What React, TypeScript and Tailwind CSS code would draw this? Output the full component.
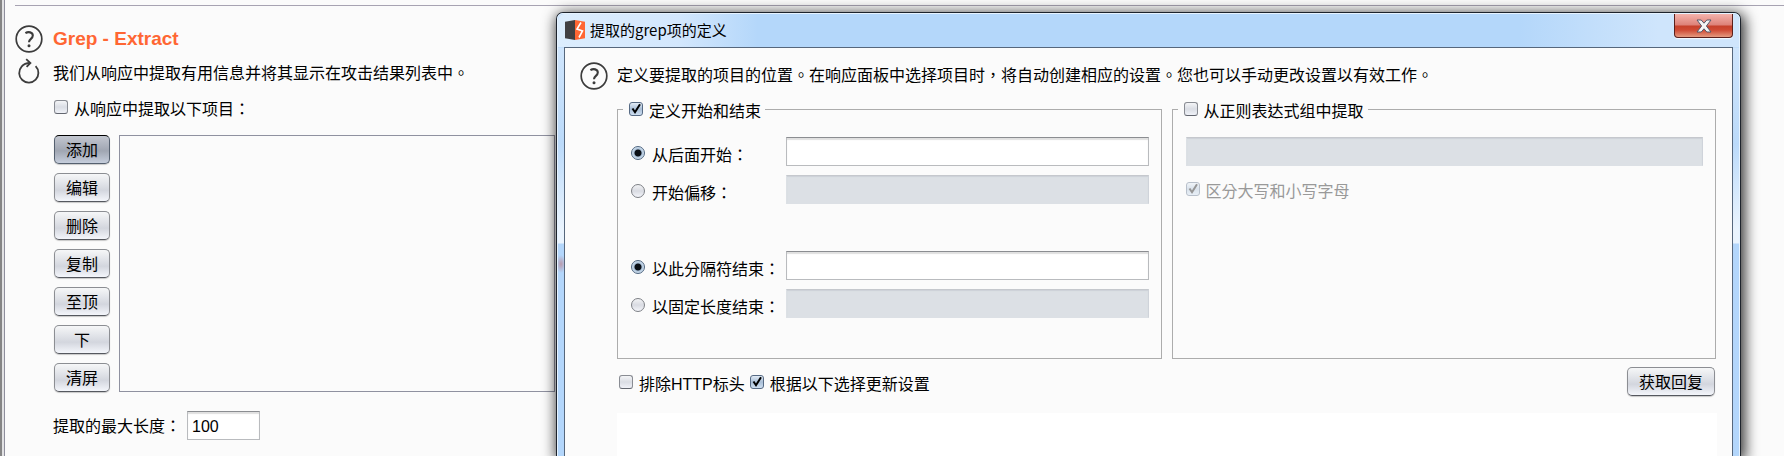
import React, { useState } from 'react';

const actions = ['添加', '编辑', '删除', '复制', '至顶', '下', '清屏'];

const buttonBase =
  'h-[29px] rounded-[5px] border pt-[3px] text-base leading-none text-black shadow-[0_1px_1px_rgba(0,0,0,0.2)]';
const buttonNormal =
  'border-[#8c8e93] border-b-[#55585f] bg-linear-to-b from-[#f6f7f8] via-[#d3d6de] via-60% to-[#f4f6fb]';
const buttonActive =
  'border-[#55606f] border-t-black bg-linear-to-b from-[#c3c7d0] via-[#a0a6b2] via-55% to-[#c6cedc]';

const fieldBase =
  'block h-[29px] min-w-0 border px-1 pt-[2px] font-[Liberation_Sans,sans-serif] text-base text-black outline-none';
const fieldEnabled =
  'border-[#b9bbbe] border-t-[#8b8d91] bg-white shadow-[inset_0_2px_1px_#e0e0e0]';
const fieldDisabled =
  'border-[#dce0e5] border-t-[#c5c8cd] border-r-[#cfd3da] bg-[#dce0e5] shadow-[inset_0_1px_1px_#cdd1d7]';

function HelpIcon() {
  return (
    <svg viewBox="0 0 28 28" className="size-7 shrink-0" fill="none" stroke="#3c3c3c" aria-hidden="true">
      <circle cx="14" cy="14" r="12.8" strokeWidth="1.7" />
      <path d="M10.4 8.2c3-2 7.4-1 7.4 2.4 0 3.2-3.8 3.4-3.8 6.6" strokeWidth="2.1" />
      <circle cx="14" cy="20.8" r="1.5" fill="#3c3c3c" stroke="none" />
    </svg>
  );
}

function ResetIcon() {
  return (
    <svg viewBox="0 0 28 28" className="size-7 shrink-0" fill="none" stroke="#3c3c3c" strokeWidth="1.8" aria-hidden="true">
      <path d="M20.6 8.2a9.6 9.6 0 1 1-14 .4C8.4 6.4 11 5 15 5" />
      <path d="M11.2 1.2 15.4 5l-3.8 3.8" />
    </svg>
  );
}

function Logo() {
  return (
    <svg viewBox="0 0 20 20" className="h-5 w-5 shrink-0" aria-hidden="true">
      <path d="M0 1.8 10 0v20L0 18.2z" fill="#414042" />
      <path d="M10 0 20 1.8v16.4L10 20z" fill="#ff6633" />
      <path d="M16 2.5 12 9l5.500 2L14 17.5" fill="none" stroke="#fff" strokeWidth="1.6" />
    </svg>
  );
}

interface TickProps {
  id: string;
  label: string;
  defaultChecked?: boolean;
  disabled?: boolean;
}

function Tick({ id, label, defaultChecked, disabled }: TickProps) {
  return (
    <label htmlFor={id} className={`flex h-[14px] items-start gap-[6px] ${disabled ? 'text-[#999]' : 'text-black'}`}>
      <span className={`grid size-[14px] shrink-0 ${disabled ? 'opacity-40' : ''}`}>
        <input
          id={id}
          type="checkbox"
          defaultChecked={defaultChecked}
          disabled={disabled}
          className="peer col-start-1 row-start-1 size-[14px] appearance-none rounded-[3px] border border-[#898c93] border-b-[#62666f] bg-linear-to-b from-[#f4f5f7] via-[#dadde4] to-[#f0f2f8] checked:border-[#566a84] checked:from-[#e3ecf6] checked:via-[#a9bed6] checked:to-[#cfe0f2]"
        />
        <svg viewBox="0 0 14 14" className="pointer-events-none invisible col-start-1 row-start-1 size-[14px] peer-checked:visible" fill="none" stroke="#000" strokeWidth="2" aria-hidden="true">
          <path d="M3.5 6.5 6 10.2 11 2.2" />
        </svg>
      </span>
      <span className="mt-[2px] leading-4">{label}</span>
    </label>
  );
}

interface RuleRowProps {
  id: string;
  group: string;
  label: string;
  active?: boolean;
}

function RuleRow({ id, group, label, active }: RuleRowProps) {
  return (
    <div className="flex items-center">
      <label htmlFor={id} className="mt-[3px] flex h-[14px] w-[155px] shrink-0 items-start gap-[7px] text-black">
        <input
          id={id}
          type="radio"
          name={group}
          defaultChecked={active}
          className="size-[14px] shrink-0 appearance-none rounded-full border border-[#7d8086] bg-linear-to-b from-[#f2f3f5] via-[#d9dbe2] to-[#f4f5fa] checked:border-[#4e6580] checked:bg-[radial-gradient(circle,#0a0f16_3px,#a9c0d8_4px,#d3e2f0_6px)]"
        />
        <span className="mt-[2px] leading-4">{label}</span>
      </label>
      <input
        type="text"
        aria-label={label}
        disabled={!active}
        className={`${fieldBase} flex-1 ${active ? fieldEnabled : fieldDisabled}`}
      />
    </div>
  );
}

function ExtractPanel() {
  const [length, setLength] = useState('100');
  return (
    <section className="w-[550px] pl-[10px]">
      <div className="flex items-center gap-[10px] pt-[19px]">
        <HelpIcon />
        <h2 className="font-[Liberation_Sans,sans-serif] text-[19px] leading-7 font-bold text-[#ff6633]">
          Grep - Extract
        </h2>
      </div>
      <div className="mt-[5px] flex items-start gap-[10px]">
        <ResetIcon />
        <p className="pt-1 leading-6">我们从响应中提取有用信息并将其显示在攻击结果列表中。</p>
      </div>
      <div className="mt-[14px] pl-[38px]">
        <div className="pl-px">
          <Tick id="extract-items" label="从响应中提取以下项目：" />
        </div>
        <div className="mt-[21px] flex gap-[9px] pl-px">
          <div className="flex flex-col gap-[9px]">
            {actions.map((name, i) => (
              <button
                key={name}
                type="button"
                className={`${buttonBase} w-14 ${i === 0 ? buttonActive : buttonNormal}`}
              >
                {name}
              </button>
            ))}
          </div>
          <div className="flex-1 border border-[#8f91a0]" />
        </div>
        <div className="mt-[19px] flex items-center gap-[6px]">
          <label htmlFor="max-length" className="pt-[3px] leading-4">提取的最大长度：</label>
          <input
            id="max-length"
            type="text"
            value={length}
            onChange={(e) => setLength(e.target.value)}
            className={`${fieldBase} ${fieldEnabled} w-[73px]`}
          />
        </div>
      </div>
    </section>
  );
}

function GrepDialog() {
  return (
    <div
      role="dialog"
      aria-labelledby="dialog-title"
      className="absolute top-3 right-[43px] bottom-0 left-[556px] flex flex-col rounded-t-[7px] border border-b-0 border-[#1d232c] bg-[#b4d7fa] shadow-[2px_3px_14px_2px_rgba(0,0,0,0.8)]"
    >
      <div className="flex flex-1 flex-col rounded-t-[6px] border border-b-0 border-[#e6f3ff] bg-[radial-gradient(5px_9px_at_3px_250px,#b99aac,transparent),linear-gradient(to_bottom,#b4d7fa_0px,#b4d7fa_33px,#cfe5fc_34px,#bbdafa_130px,#eaf4fe_215px,#eaf4fe_229px,#b3d6fb_230px)] px-[6px]">
        <header className="-mx-[6px] flex h-[33px] items-start rounded-t-[6px] bg-[linear-gradient(to_right,#dcedfd_0px,#d3e7fd_120px,transparent_200px,transparent_calc(100%-220px),#cfe5fc_calc(100%-80px),#cfe5fc_100%)] px-[6px]">
          <div className="flex flex-1 items-center gap-[5px] pt-[6px] pl-px">
            <Logo />
            <h1
              id="dialog-title"
              className="font-[Noto_Sans_CJK_SC,sans-serif] text-[15px] leading-5 text-black"
            >
              提取的grep项的定义
            </h1>
          </div>
          <button
            type="button"
            aria-label="关闭"
            className="flex h-6 w-[59px] items-center justify-center rounded-b-[4px] border border-t-0 border-[#5b1f1b] bg-[linear-gradient(to_bottom,#f4b3ac,#dd8178_48%,#c6402b_52%,#cf4a34_70%,#e59a80)] shadow-[0_1px_1px_#f4faff]"
          >
            <svg viewBox="0 0 16 14" className="h-[14px] w-4" aria-hidden="true">
              <path d="M1 1h4.2L8 4.2 10.8 1H15l-4.6 6L15 13h-4.2L8 9.8 5.2 13H1l4.6-6z" fill="#f4f4f4" stroke="#55586b" />
            </svg>
          </button>
        </header>
        <div className="flex flex-1 flex-col border border-b-0 border-[#56677c] bg-[#fbfbfb] px-[15px]">
          <div className="flex items-center gap-[9px] pt-[14px]">
            <HelpIcon />
            <p className="leading-7">
              定义要提取的项目的位置。在响应面板中选择项目时，将自动创建相应的设置。您也可以手动更改设置以有效工作。
            </p>
          </div>
          <div className="flex flex-1 flex-col pl-[37px]">
            <div className="mt-3 flex gap-[10px] pr-px">
              <fieldset className="min-w-0 flex-1 border border-[#acacac] pr-3 pb-10 pl-[13px]">
                <legend className="-ml-2 pr-1 pl-[6px]">
                  <Tick id="define-range" label="定义开始和结束" defaultChecked />
                </legend>
                <div className="mt-[21px] flex flex-col gap-[9px]">
                  <RuleRow id="after" group="start" label="从后面开始：" active />
                  <RuleRow id="offset" group="start" label="开始偏移：" />
                </div>
                <div className="mt-[47px] flex flex-col gap-[9px]">
                  <RuleRow id="delimiter" group="end" label="以此分隔符结束：" active />
                  <RuleRow id="fixed" group="end" label="以固定长度结束：" />
                </div>
              </fieldset>
              <fieldset className="min-w-0 flex-1 border border-[#acacac] pr-3 pl-[13px]">
                <legend className="-ml-2 pr-1 pl-[6px]">
                  <Tick id="regex-group" label="从正则表达式组中提取" />
                </legend>
                <input
                  type="text"
                  aria-label="从正则表达式组中提取"
                  disabled
                  className={`${fieldBase} ${fieldDisabled} mt-[21px] mb-4 w-full`}
                />
                <Tick id="case" label="区分大写和小写字母" defaultChecked disabled />
              </fieldset>
            </div>
            <div className="mt-2 flex items-center justify-between pr-[2px] pl-[2px]">
              <div className="flex gap-[5px]">
                <Tick id="exclude-headers" label="排除HTTP标头" />
                <Tick id="update-config" label="根据以下选择更新设置" defaultChecked />
              </div>
              <button type="button" className={`${buttonBase} ${buttonNormal} w-[88px]`}>
                获取回复
              </button>
            </div>
            <div className="mt-[17px] flex-1 bg-white" />
          </div>
        </div>
      </div>
    </div>
  );
}

export default function App() {
  return (
    <div className="relative flex min-h-screen overflow-hidden bg-[#fbfbfb] font-[Liberation_Sans,Noto_Sans_CJK_TC,sans-serif] text-base text-black">
      <div className="w-[5px] shrink-0 border-r border-l-2 border-r-[#8e8e9c] border-l-[#858585] bg-[#e2e2e4]" />
      <main className="min-w-0 flex-1 pt-[5px]">
        <div className="ml-[10px] border-t border-[#a7a3b2]" />
        <ExtractPanel />
      </main>
      <GrepDialog />
    </div>
  );
}
